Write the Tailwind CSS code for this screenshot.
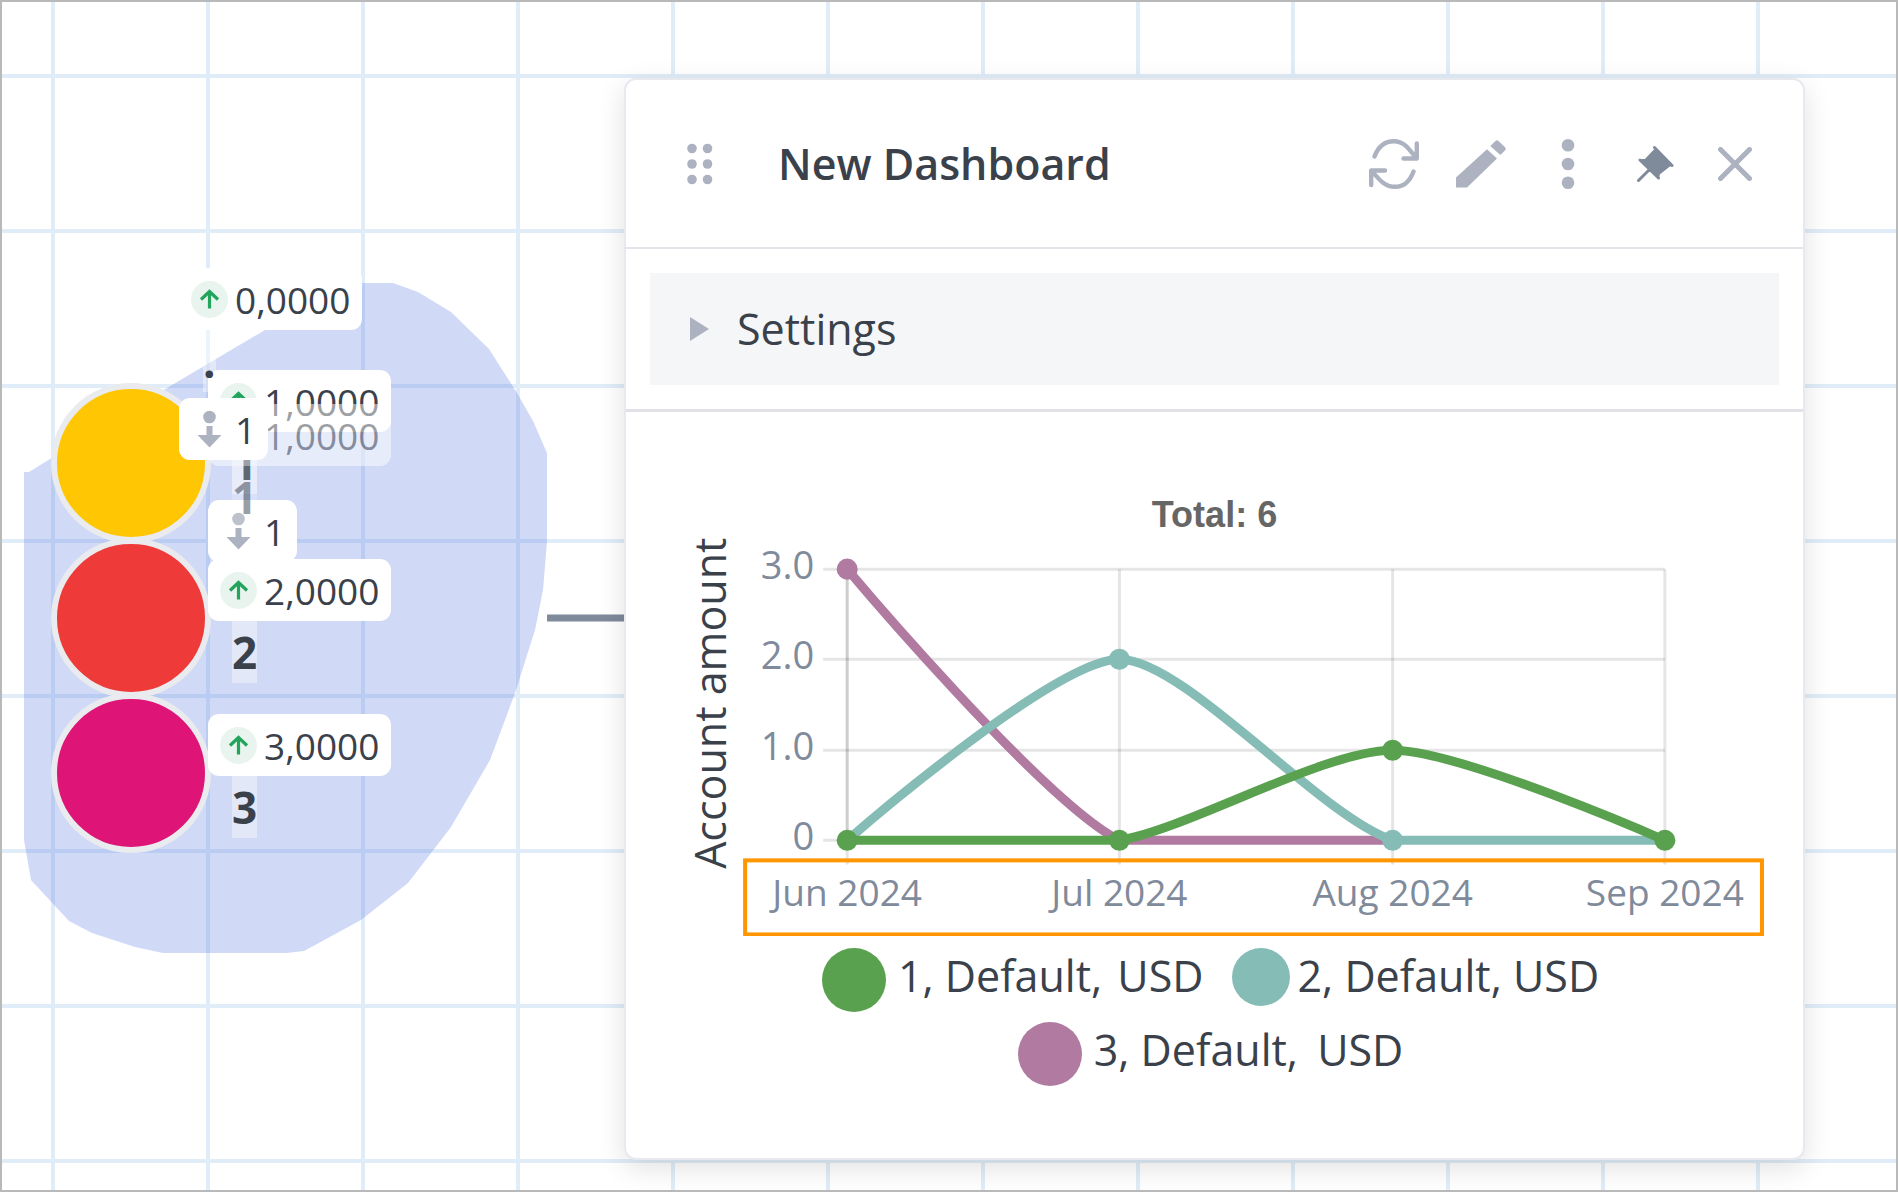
<!DOCTYPE html>
<html lang="en">
<head>
<meta charset="utf-8">
<meta name="viewport" content="width=device-width, initial-scale=1">
<title>New Dashboard</title>
<script src="https://cdn.jsdelivr.net/npm/@tailwindcss/browser@4"></script>
</head>
<body class="bg-white font-['Open_Sans',sans-serif] text-[#3a414b]">
<main class="relative flex min-h-screen items-start overflow-hidden border-2 border-[#b9b9b9]">

  <!-- Graph canvas -->
  <section aria-label="Graph" class="absolute -inset-[2px]">
    <svg class="absolute inset-0 h-full w-full" aria-hidden="true">
      <defs>
        <pattern id="grid" x="51" y="74" width="155" height="155" patternUnits="userSpaceOnUse">
          <path d="M2 0V155M0 2H155" stroke="#e0edf8" stroke-width="4"/>
        </pattern>
      </defs>
      <rect width="100%" height="100%" fill="url(#grid)"/>
      <path fill="#6482e1" fill-opacity=".3" d="M24 472H29L50 459L167 388L265 330L363 283H393L418 292L451 312L489 349L517 393L533 421L547 453V541L543 590L535 630L515 693L490 760L451 827L408 883L361 920L304 951L286 953H163L135 947L92 933L69 921L31 880L24 840Z"/>
      <path d="M547 618H640" stroke="#7f8a9b" stroke-width="7"/>
      <g stroke="#e9ebef" stroke-width="6">
        <circle cx="131" cy="463" r="77" fill="#ffc604"/>
        <circle cx="131" cy="618" r="77" fill="#ee3a39"/>
        <circle cx="131" cy="773" r="77" fill="#df1477"/>
      </g>
      <defs>
        <symbol id="up" viewBox="0 0 37 37">
          <circle cx="18.5" cy="18.5" r="18.5" fill="#e8f4ed"/>
          <path d="M18.5 27.500V11M10 18.500L18.500 10.500L27 18.500" fill="none" stroke="#22a45d" stroke-width="3.200"/>
        </symbol>
        <symbol id="down" viewBox="0 0 37 50">
          <g fill="#acb2bf"><circle cx="18.500" cy="13" r="6.300"/><path d="M15.500 22h6v9h9l-12 12.500l-12 -12.500h9z"/></g>
        </symbol>
      </defs>
    </svg>

    <div class="absolute top-[370px] left-[208px]">
      <div class="flex h-[62px] items-center gap-[7px] rounded-[11px] bg-white px-3 text-[37px] leading-none"><svg class="size-[37px]"><use href="#up"/></svg>1,0000</div>
      <div class="ml-6 w-fit bg-white/40 text-[44px] leading-[62px] font-bold">1</div>
    </div>
    <div class="absolute top-[268px] left-[179px]">
      <div class="flex h-[62px] items-center gap-[7px] rounded-[11px] bg-white px-3 text-[37px] leading-none"><svg class="size-[37px]"><use href="#up"/></svg>0,0000</div>
      <div class="ml-6 w-fit bg-white/40 text-[44px] leading-[62px] font-bold">.</div>
    </div>
    <div class="absolute top-[500px] left-[208px] flex h-[62px] items-center gap-[7px] rounded-[11px] bg-white px-3 text-[37px] leading-none"><svg class="h-[50px] w-[37px]"><use href="#down"/></svg>1</div>
    <div class="absolute top-[404px] left-[208px] opacity-50">
      <div class="flex h-[62px] items-center gap-[7px] rounded-[11px] bg-white px-3 text-[37px] leading-none"><svg class="size-[37px]"><use href="#up"/></svg>1,0000</div>
      <div class="ml-6 w-fit bg-white/40 text-[44px] leading-[62px] font-bold">1</div>
    </div>
    <div class="absolute top-[398px] left-[179px] flex h-[62px] items-center gap-[7px] rounded-[11px] bg-white px-3 text-[37px] leading-none"><svg class="h-[50px] w-[37px]"><use href="#down"/></svg>1</div>
    <div class="absolute top-[559px] left-[208px]">
      <div class="flex h-[62px] items-center gap-[7px] rounded-[11px] bg-white px-3 text-[37px] leading-none"><svg class="size-[37px]"><use href="#up"/></svg>2,0000</div>
      <div class="ml-6 w-fit bg-white/40 text-[44px] leading-[62px] font-bold">2</div>
    </div>
    <div class="absolute top-[714px] left-[208px]">
      <div class="flex h-[62px] items-center gap-[7px] rounded-[11px] bg-white px-3 text-[37px] leading-none"><svg class="size-[37px]"><use href="#up"/></svg>3,0000</div>
      <div class="ml-6 w-fit bg-white/40 text-[44px] leading-[62px] font-bold">3</div>
    </div>
  </section>

  <!-- Dashboard panel -->
  <article class="relative mt-[76px] mr-[91px] ml-[622px] flex-1 rounded-xl border-2 border-[#e8e9ef] bg-white shadow-[0_8px_28px_rgba(0,0,0,0.12)]">
    <header class="flex h-[169px] items-center border-b-2 border-[#e3e4e9] pr-[31px] pl-[60px]">
      <button type="button" aria-label="Move panel">
        <svg class="h-[42px] w-[27px]" viewBox="0 0 27 42" fill="#acb2bf"><circle cx="6" cy="5.500" r="4.800"/><circle cx="21.500" cy="5.500" r="4.800"/><circle cx="6" cy="21" r="4.800"/><circle cx="21.500" cy="21" r="4.800"/><circle cx="6" cy="36.500" r="4.800"/><circle cx="21.500" cy="36.500" r="4.800"/></svg>
      </button>
      <h1 class="ml-[65px] flex-1 text-[43px] leading-[60px] font-semibold">New Dashboard</h1>
      <button type="button" aria-label="Refresh" class="flex w-[87px] justify-center">
        <svg class="size-[50px]" viewBox="0 0 50 50" fill="none" stroke="#acb2bf" stroke-width="4.400" stroke-linecap="round" stroke-linejoin="round"><path d="M5.500 17.500C9 8 16 2.200 25 2.200C34.500 2.200 39 8.500 47.500 19.500M47.800 4.500V19.500H34.500M44.500 32.500C41 42 34.500 47.800 26 47.800C16.500 47.800 10.500 41.500 2.500 31.500M2.200 46V31.500H16"/></svg>
      </button>
      <button type="button" aria-label="Edit" class="flex w-[87px] justify-center">
        <svg class="size-[50px]" viewBox="0 0 50 50" fill="#acb2bf"><path d="M0 38.500L31 10.300L41 19.500L11 48.500H0ZM34.300 7L39.500 2Q41 .7 42.500 2L49 8.300Q50.500 10 49 11.500L44.300 16Z"/></svg>
      </button>
      <button type="button" aria-label="More" class="flex w-[87px] justify-center">
        <svg class="size-[50px]" viewBox="0 0 50 50" fill="#acb2bf"><circle cx="25" cy="6.300" r="6.300"/><circle cx="25" cy="25" r="6.300"/><circle cx="25" cy="43.700" r="6.300"/></svg>
      </button>
      <button type="button" aria-label="Unpin" class="flex w-[87px] justify-center">
        <svg class="size-[38px]" viewBox="0 0 38 38" fill="#7f8a9b" stroke="#7f8a9b" stroke-width="3" stroke-linecap="round" stroke-linejoin="round"><path d="M18.500 2.500L36 20.500M4 15L22.500 33M2.500 35.500L13.500 24.500M19 5.500L34.500 19L22.500 28.500L22 31.500L6 15.500L9.500 15.500Z"/></svg>
      </button>
      <button type="button" aria-label="Close" class="flex w-[74px] justify-center">
        <svg class="size-[34px]" viewBox="0 0 34 34" stroke="#acb2bf" stroke-width="5" stroke-linecap="round"><path d="M2.500 2.500L31.500 31.500M31.500 2.500L2.500 31.500"/></svg>
      </button>
    </header>

    <div class="border-b-3 border-[#e1e1e7] p-6">
      <button type="button" aria-expanded="false" class="flex h-28 w-full items-center gap-7 bg-[#f5f6f8] pl-10 text-[43px] leading-[60px]">
        <svg class="h-6 w-[19px]" viewBox="0 0 19 24" fill="#acb2bf"><path d="M0 0L19 12L0 24Z"/></svg>
        Settings
      </button>
    </div>

    <!-- Line chart -->
    <svg class="block w-full" viewBox="0 0 1176 524" role="img" aria-label="Account amount by month">
      <text x="588" y="115" text-anchor="middle" class="fill-[#666] font-['Liberation_Sans',sans-serif] text-[36px] font-bold">Total: 6</text>
      <text transform="translate(100 291) rotate(-90)" text-anchor="middle" class="fill-[#3a414b] text-[43px]">Account amount</text>
      <g stroke="#000" stroke-opacity=".1" stroke-width="3">
        <path d="M197 157H1038M197 247H1038M197 338H1038M197 428H1038"/>
        <path d="M221 157V452M493 157V452M766 157V452M1038 157V452"/>
        <path d="M221 157V428"/>
      </g>
      <g text-anchor="end" class="fill-[#7f8a9b] text-[38px]">
        <text x="188" y="167">3.0</text><text x="188" y="257">2.0</text><text x="188" y="348">1.0</text><text x="188" y="438">0</text>
      </g>
      <g fill="none" stroke-width="9">
        <path stroke="#b07aa1" d="M221 157C221 157 417 390 493 428C529 428 730 428 766 428"/>
        <path stroke="#86bcb6" d="M221 428C221 428 428 247 493 247C558 247 692 403 766 428H1038"/>
        <path stroke="#59a14f" d="M221 428H493C563 416 698 338 766 338C834 338 1038 428 1038 428"/>
      </g>
      <circle cx="221" cy="157" r="10.500" fill="#b07aa1"/>
      <g fill="#86bcb6"><circle cx="493" cy="247" r="10.500"/><circle cx="766" cy="428" r="10.500"/></g>
      <g fill="#59a14f"><circle cx="221" cy="428" r="10.500"/><circle cx="493" cy="428" r="10.500"/><circle cx="766" cy="338" r="10.500"/><circle cx="1038" cy="428" r="10.500"/></g>
      <rect x="119" y="448" width="1016" height="74" fill="none" stroke="#ff9500" stroke-width="4"/>
      <g text-anchor="middle" class="fill-[#7f8a9b] text-[37px]">
        <text x="221" y="494">Jun 2024</text><text x="493" y="494">Jul 2024</text><text x="766" y="494">Aug 2024</text><text x="1038" y="494">Sep 2024</text>
      </g>
    </svg>

    <ul class="flex flex-wrap justify-center gap-x-7 gap-y-2.5 pt-3 pr-8 pb-[72px] pl-6 text-[43px] leading-[56px]">
      <li class="flex h-16 gap-3"><span class="size-16 rounded-full bg-[#59a14f]"></span><span>1, Default, <span class="ml-1">USD</span></span></li>
      <li class="flex h-16 gap-2"><span class="size-[58px] rounded-full bg-[#86bcb6]"></span><span>2, Default, <span>USD</span></span></li>
      <li class="flex h-16 gap-3"><span class="size-16 rounded-full bg-[#b07aa1]"></span><span>3, Default, <span class="ml-2">USD</span></span></li>
    </ul>
  </article>
</main>
</body>
</html>
